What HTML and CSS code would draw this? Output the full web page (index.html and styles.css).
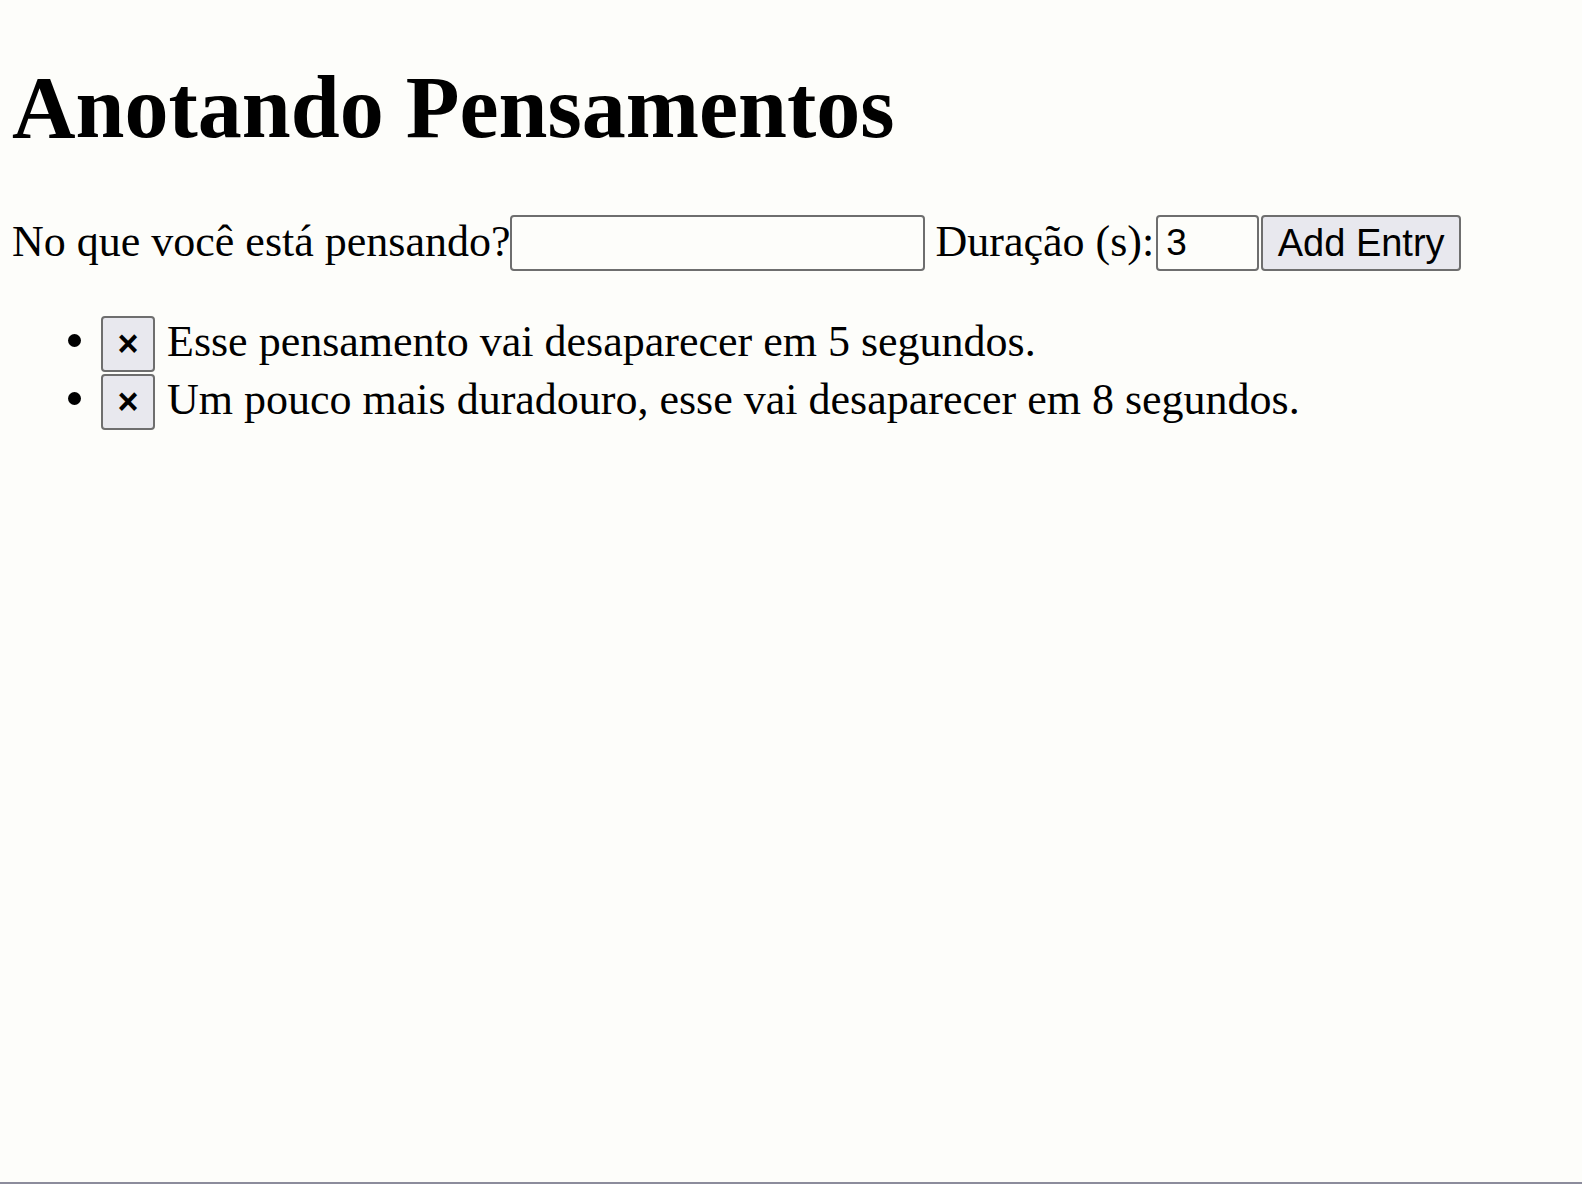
FILE: index.html
```html
<!DOCTYPE html>
<html lang="pt">
<head>
<meta charset="utf-8">
<title>Anotando Pensamentos</title>
<link rel="stylesheet" href="styles.css">
</head>
<body>
<h1 class="title">Anotando Pensamentos</h1>
<form class="entry-form">
  <label class="field"><span class="label-text">No que você está pensando?</span><input class="text-input" type="text"></label>
  <label class="field duration"><span class="label-text">Duração (s):</span><input class="num-input" type="text" value="3"></label>
  <button class="add-btn" type="button">Add Entry</button>
</form>
<ul class="entries">
  <li class="entry"><button class="del-btn" type="button">×</button> <span class="entry-text">Esse pensamento vai desaparecer em 5 segundos.</span></li>
  <li class="entry"><button class="del-btn" type="button">×</button> <span class="entry-text">Um pouco mais duradouro, esse vai desaparecer em 8 segundos.</span></li>
</ul>
</body>
</html>
```
FILE: styles.css
```css
html {
  min-height: 100vh;
  box-sizing: border-box;
  border-bottom: 2px solid #8c8c9c;
  background: #fdfdfa;
}
body {
  margin: 0;
  padding: 12px;
  font-family: "Liberation Serif", "Times New Roman", serif;
  font-size: 44px;
  color: #000;
}
.title {
  font-size: 88px;
  font-weight: bold;
  margin: 45px 0 0 0;
  line-height: 101px;
}
.entry-form {
  display: flex;
  align-items: center;
  margin-top: 57px;
  height: 56px;
}
.field {
  display: flex;
  align-items: center;
}
.label-text {
  margin-bottom: 4px;
}
.duration {
  margin-left: 10px;
}
.text-input,
.num-input {
  box-sizing: border-box;
  height: 56px;
  border: 2px solid #6e6e6e;
  border-radius: 4px;
  background: #fdfdfa;
  font-family: "Liberation Sans", Arial, sans-serif;
  font-size: 37px;
  padding: 0 8px;
  margin: 0;
}
.text-input {
  width: 415px;
}
.num-input {
  width: 103px;
  margin-left: 2px;
}
.add-btn {
  box-sizing: border-box;
  height: 56px;
  width: 200px;
  margin-left: 2px;
  border: 2px solid #6e6e6e;
  border-radius: 4px;
  background: #e8e8ee;
  font-family: "Liberation Sans", Arial, sans-serif;
  font-size: 38px;
  color: #000;
  padding: 0;
}
.entries {
  margin: 43px 0 0 0;
  padding-left: 89px;
}
.entry {
  display: list-item;
}
.del-btn {
  box-sizing: border-box;
  width: 54px;
  height: 56px;
  vertical-align: middle;
  border: 2px solid #6e6e6e;
  border-radius: 4px;
  background: #e8e8ee;
  font-family: "Liberation Sans", Arial, sans-serif;
  font-weight: bold;
  font-size: 36px;
  line-height: 1;
  color: #000;
  padding: 0;
  margin: 0;
}
.entry-text {
  vertical-align: -2px;
  margin-left: 1px;
}
```
